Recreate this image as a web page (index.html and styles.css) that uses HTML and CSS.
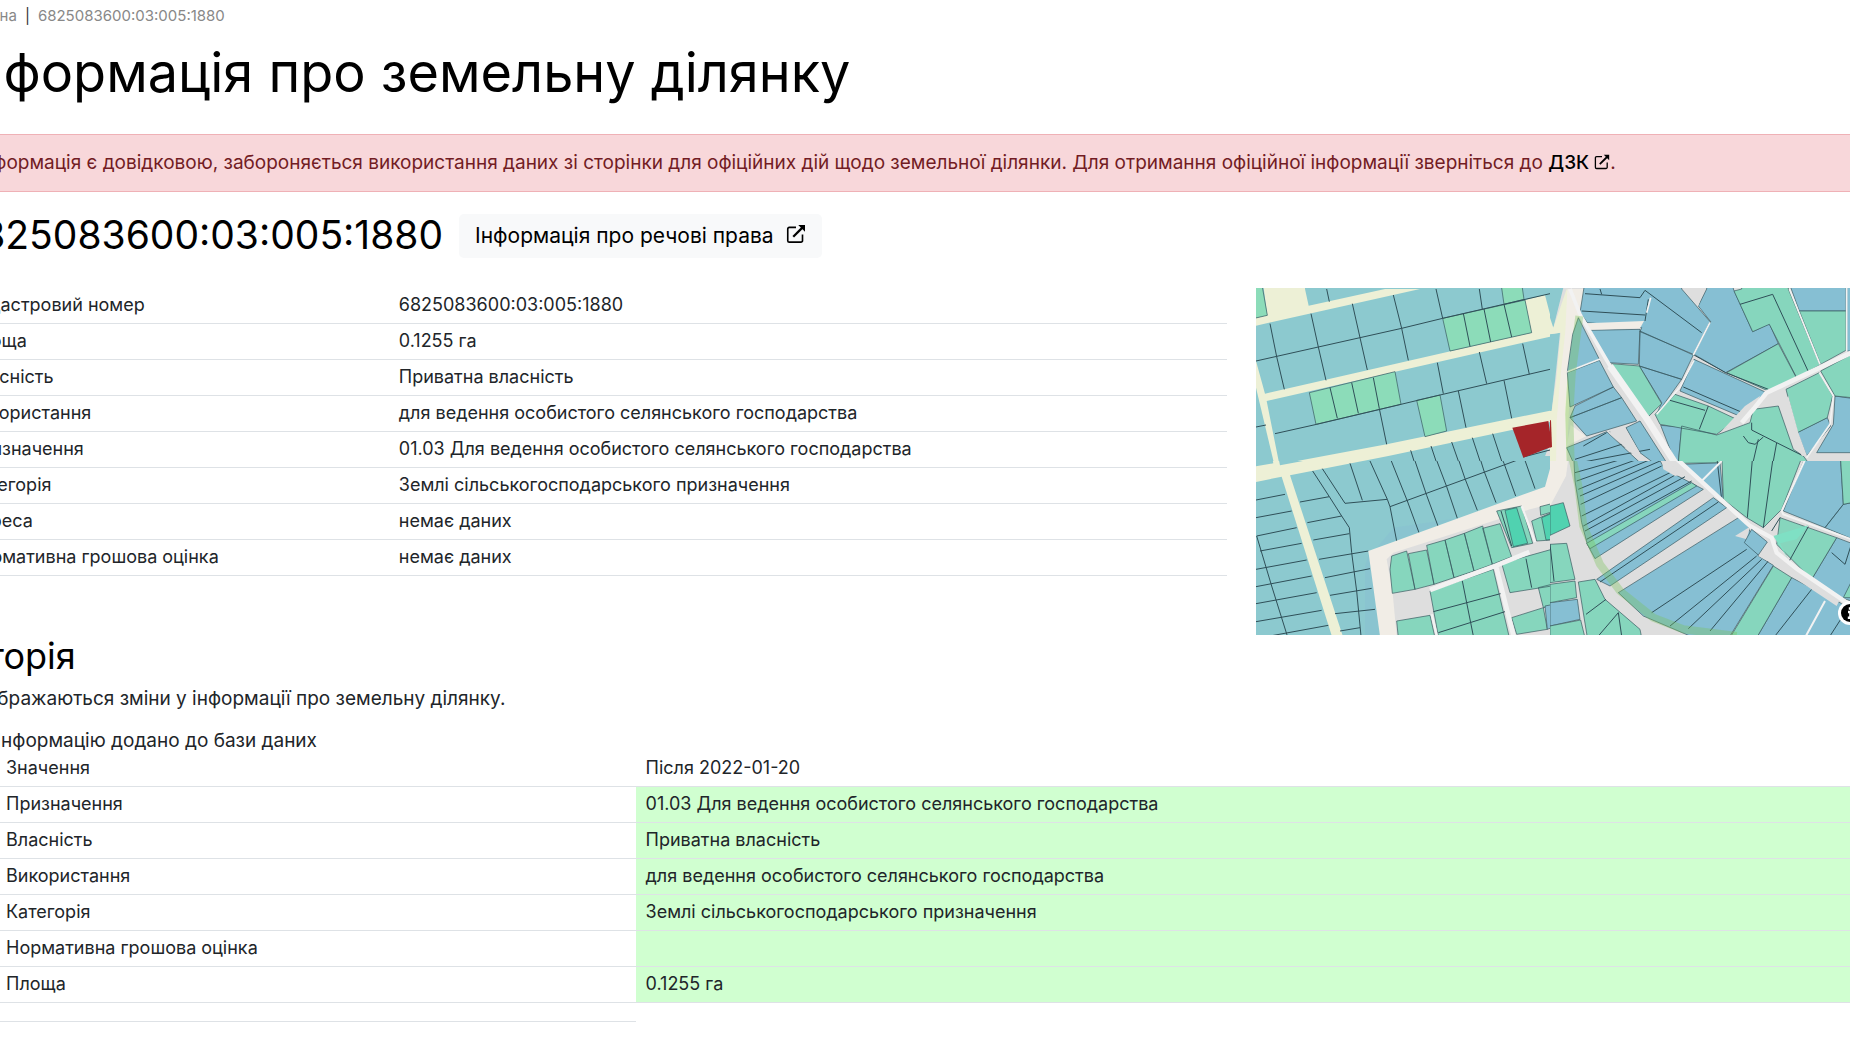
FILE: index.html
```html
<!DOCTYPE html>
<html lang="uk">
  <head>
    <meta charset="utf-8">
    <meta name="viewport" content="width=device-width, initial-scale=1">
    <title>6825083600:03:005:1880</title>
    <link rel="stylesheet" href="styles.css">
  </head>
  <body>

  <svg class="sprite" aria-hidden="true">
    <symbol id="ext" viewBox="0 0 16 16">
      <path d="M8 2.7H2.6a1.2 1.2 0 0 0-1.2 1.2v9.4a1.2 1.2 0 0 0 1.2 1.2H12a1.2 1.2 0 0 0 1.2-1.2V8.4" fill="none" stroke="currentColor" stroke-width="1.3"/>
      <path d="M5.8 10.2 13.5 2.500" fill="none" stroke="currentColor" stroke-width="1.8"/>
      <path d="M9.800.8h5.400v5.400z" fill="currentColor"/>
    </symbol>
  </svg>

  <div class="page">
    <nav class="breadcrumbs"><a href="#">Головна</a><span class="sep">|</span><span>6825083600:03:005:1880</span></nav>

    <h1>Інформація про земельну ділянку</h1>

    <div class="alert">
      Інформація є довідковою, забороняється використання даних зі сторінки для офіційних дій щодо земельної ділянки. Для отримання офіційної інформації зверніться до <a href="#">ДЗК <svg class="icon"><use href="#ext"/></svg></a>.
    </div>

    <div class="heading">
      <h2>6825083600:03:005:1880</h2>
      <a class="btn" href="#">Інформація про речові права <svg class="icon"><use href="#ext"/></svg></a>
    </div>

    <div class="row">
      <table class="table info">
        <tr><td>Кадастровий номер</td><td>6825083600:03:005:1880</td></tr>
        <tr><td>Площа</td><td>0.1255 га</td></tr>
        <tr><td>Власність</td><td>Приватна власність</td></tr>
        <tr><td>Використання</td><td>для ведення особистого селянського господарства</td></tr>
        <tr><td>Призначення</td><td>01.03 Для ведення особистого селянського господарства</td></tr>
        <tr><td>Категорія</td><td>Землі сільськогосподарського призначення</td></tr>
        <tr><td>Адреса</td><td>немає даних</td></tr>
        <tr><td>Нормативна грошова оцінка</td><td>немає даних</td></tr>
      </table>

      <div class="map">
        <svg class="map-canvas" viewBox="0 0 1863 1041" preserveAspectRatio="xMinYMin slice">
          <rect class="ground" width="1863" height="1041"/>

          <!-- south-west -->
          <svg x="-18" y="504" width="900" height="540">
            <path class="teal" d="M0-20H900V540H0z"/>
            <path class="blue nl" d="M380 275 620 187 430 215zM345 330 358 290 388 540H345z"/>
            <path class="cream" d="M0 34 70 22 60-20 80-20 90 28 240 0 340-20 515-20 415 0 120 58 280 545H247L95 62 0 82z"/>
            <path class="line" d="M20 240 65 390 112 540M18 132 105 115M18 185 125 165M20 240 140 215M30 285 155 262M18 340 170 312M18 392 185 360M18 443 200 410M18 497 215 463M60 540 235 508M150 138 238 122M172 200 275 180M190 252 298 233M207 310 355 285M225 365 360 338M240 418 365 397M255 473 375 460M270 525 330 515"/>
            <path class="line" d="M188 45 238 122 275 180 298 215 305 290 320 405 333 540M217 38 285 142 412 130M300 22 337 133M360 15 412 130 420 152 440 255M418 0 472 135 507 230M490 0 530 118 565 213M555 0 590 92 622 187M622 0 645 68 682 163M688 0 702 45 738 140M752 0 762 22 797 120M822 5 855 98M420 152 822 5"/>
            <path class="road" d="M355 285 885 92 905 20 960 20V540H390z"/>
            <path class="ground" d="M410 310 430 290 840 160 900 145V540H440L428 412z"/>
            <path class="green" d="M425 300 470 285 495 400 427 412 420 340zM475 293 530 282 552 385 495 400zM530 268 585 252 612 365 552 385zM585 252 643 232 672 345 612 365zM643 232 698 210 727 325 672 345zM698 217 750 203 785 302 727 325z"/>
            <path class="green" d="M740 165 815 150 848 262 785 275zM845 195 905 170V252L860 255zM870 152 905 143V168L872 178zM540 405 730 340 777 540H565zM440 495 540 478 555 545H445zM755 322 905 280V390L780 410zM865 395 905 385V450L880 455zM785 485 880 455 892 520 800 535z"/>
            <path class="bright" d="M765 163 800 155 833 262 790 272zM875 185 905 172V250L888 252z"/>
            <path class="blue" d="M885 450 905 446V515L892 520z"/>
            <path class="line" d="M637 375 670 540M550 467 755 412M565 530 765 467M828 308 845 395M753 165 785 270"/>
            <path class="way" d="M540 402 740 328 838 288M738 330 792 545" stroke-width="14"/>
            <path class="way" d="M815 150 855 258M545 475 562 545" stroke-width="7"/>
          </svg>

          <!-- north-west -->
          <svg x="-18" y="-21" width="900" height="540">
            <path class="teal" d="M0 0H905V470L880 540H0z"/>
            <path class="cream" d="M38 0 52 103 0 115V138L510 24H405L176 74 165 24V0zM0 240 18 240 45 338 845 155 825 57 885 42 900 100V167L50 360 88 550 410 490 905 388V422L415 525 120 583 60 583 0 280z"/>
            <path class="teal" d="M0 300 18 320 72 547 0 560z"/>
            <path class="green light" d="M0 0H34L52 103 0 115zM752 0H814L822 55 762 70zM578 112 825 57 845 155 600 210zM178 335 435 272 453 370 198 430zM500 358 570 342 590 450 525 467z"/>
            <path class="line" d="M18 240 205 198 455 142 578 112 900 38M60 128 80 227 103 325M183 98 205 198 228 298M307 68 330 170 352 267M430 42 455 142 475 238M558 24 578 112M688 24 697 85M230 24 238 62M640 97 660 196M702 84 722 183M762 70 785 168M75 458 200 430 390 385 570 342 900 265M240 320 262 412M305 305 325 397M370 290 388 383 410 490M562 245 580 338M688 213 710 308M818 188 838 280M625 330 648 440M762 298 785 412M728 458 755 540M667 470 690 540M605 483 625 540M543 495 558 540M482 508 492 540M18 438 48 432M820 528 900 507"/>
            <path class="selected" d="M787 440 895 420 907 497 820 530z"/>
          </svg>

          <!-- south-east -->
          <svg x="882" y="504" width="981" height="540">
            <path class="road" d="M0-30H60L48 60 0 150z"/>
            <path class="blue" d="M70-20H310L345 40 460 100 135 308 112 265 95 200 75 75zM140 370 490 125 530 155 180 390zM205 410 570 182 595 213 625 300 670 328 540 540H420L280 480zM400 25 510 20 520 130 455 75zM775-20H870L880 145 825 215 700 165zM880 145 905 140V248L825 215zM860 245 905 262V435L870 425 785 370zM725 365 870 440 905 465V545H620z"/>
            <path class="blue" d="M0 440 82 430 90 490 0 510z"/>
            <path class="green" d="M385-5H510L512 20 390 22zM515-20H765L695 160 640 215 590 185 520 130zM870-20H905V140L880 145zM690 185 860 245 785 370 680 265zM670 330 725 365 620 545H540zM110 262 425 80 440 90 120 278zM0 265 50 262 75 370 0 380zM0 385 75 375 80 425 0 440zM0 510 92 492 105 545H0zM85 378 135 370 165 430 270 520 275 545H112zM905 375 880 425H905z"/>
            <path class="bright" d="M0 150 40 140 60 210 0 238z"/>
            <path class="line" d="M75 50 250 0M80 75 290 0M85 100 315 5M90 120 330 15M92 145 335 30M95 180 370 45M100 210 385 52M105 225 405 62M110 250 425 75M150 378 505 138M305 470 590 280M360 510 620 300M415 518 635 310M480 525 655 315M608 0 592 185M670 0 640 215M775 212 715 320M690 185 665 225M785 400 675 540M885 470 840 540M845 290 885 325M885 325 905 262M0 265 12 375M108 475 168 430M145 540 205 470 215 540M500 0 515 130"/>
            <path class="glade" d="M670 240 775 208 740 250 690 262 715 310"/>
            <path class="way" d="M515 15 455 75M770 0 695 165 700 175 905 250M825 435 765 545" stroke-width="6"/>
            <path class="ground" d="M335 10 405 55 375 60 340 40zM555 240 600 212 590 250zM625 300 668 250 690 290 720 320 800 385 870 430 860 450 680 330z"/>
            <path class="way" d="M360-10 600 210 665 245 680 290 740 338 905 450" stroke-width="13"/>
            <path class="blue" d="M605 220 652 258 625 297 583 260z"/>
            <path class="verge" d="M62-20 85 90 100 210 150 325 210 405 310 485 400 520 560 540"/>
          </svg>

          <!-- north-east -->
          <svg x="882" y="-21" width="981" height="540">
            <rect class="ground" width="981" height="540"/>
            <path class="teal" d="M0 0H45L10 140 0 165zM0 160 30 155 15 300 5 390 0 400z"/>
            <path class="cream" d="M50 24 10 140 0 110V160L32 155 18 300 5 390 0 390V560H50L60 300 90 95z"/>
            <path class="road" d="M52 24H105L88 90 60 200 45 380 50 560H18L20 420 30 300 46 150z"/>
            <path class="selected" d="M0 418 3 418 6 498 0 500z"/>
            <path class="blue" d="M105 0H395V24L480 122 430 220 270 152 275 140 112 125 90 95zM115 148 270 145 265 250 175 245zM270 150 430 222 395 295 268 255zM268 255 395 295 320 400 335 365zM470 24V0H550V24L608 152 658 128 685 188 527 275 432 220 482 122 445 75zM715 0H888V90H748zM432 235 650 335 580 410 390 330zM742 455 832 410 842 435 770 525zM855 345 905 352V515H800L850 430zM890 0H905V210H890z"/>
            <path class="blue" d="M85 110 148 235 52 272 68 160zM52 275 148 238 190 318 60 378zM75 375 190 318 215 350 60 410zM60 410 215 350 260 420 110 465zM50 500 170 452 270 545 70 545zM228 440 270 420 350 545 310 545 270 515zM332 433 395 438 385 545 370 530z"/>
            <path class="road" d="M110 127 282 120 270 142 118 146zM62 432 108 466 50 495z"/>
            <path class="green" d="M185 248 268 255 335 368 290 412zM552 30 575 24V0H715V24L810 252 740 290 658 130 608 152zM685 188 740 292 655 330 530 275zM748 90H888V208L812 250zM375 340 475 375 560 415 500 460 330 430 315 400zM395 435 500 462 600 425 610 385 685 375 730 505 760 525 775 545H385zM708 325 808 275 848 345 832 410 742 455zM812 270 905 220V350L855 345z"/>
            <path class="line" d="M105 38 270 50 285 28 455 155M95 90 285 102M295 55 285 120M150 24 155 40M400 318 578 395M432 222 527 275 655 325M360 358 465 388M475 375 448 445M570 70 668 40 775 272M605 425 605 447 680 485 760 525M580 465 595 485 615 490 640 468M625 475 610 540M680 485 670 540M100 495 170 455M75 535 230 485M90 545 300 505M180 452 225 500"/>
            <path class="ground" d="M175 455 225 440 270 515 255 525zM392 0H470L445 75zM690 375 715 345 745 455 772 527 755 524z"/>
            <path class="way" d="M480 124 430 222M432 238 390 318 320 400M718 24 810 250M808 275 850 345 840 430 770 530M52 272 150 234M890 0V212M302 50 290 95" stroke-width="5"/>
            <path class="ground" d="M585 375 630 345 620 380 590 415 530 440 510 455z"/>
            <path class="way" d="M905 215 650 335 610 385 575 425" stroke-width="14"/>
            <path class="way" d="M60 24 90 100 180 255 290 412" stroke-width="11"/>
            <path class="way" d="M180 255 290 412 378 550" stroke-width="20"/>
            <path class="verge" d="M88 105 65 280 58 400 62 550"/>
          </svg>
        </svg>
        <button class="map-info" type="button" aria-label="Інформація про карту">
          <svg viewBox="0 0 24 24"><circle cx="12" cy="12" r="9"/><path d="M12 6.300v2.400M10 11h2.400v5M9.800 16.700h4.800" fill="none" stroke="#fff" stroke-width="2.400"/></svg>
        </button>
      </div>
    </div>

    <h3>Історія</h3>
    <p>Відображаються зміни у інформації про земельну ділянку.</p>

    <ul class="history">
      <li>
        Інформацію додано до бази даних
        <table class="table changes">
          <tr><td>Значення</td><td>Після 2022-01-20</td></tr>
          <tr><td>Призначення</td><td class="added">01.03 Для ведення особистого селянського господарства</td></tr>
          <tr><td>Власність</td><td class="added">Приватна власність</td></tr>
          <tr><td>Використання</td><td class="added">для ведення особистого селянського господарства</td></tr>
          <tr><td>Категорія</td><td class="added">Землі сільськогосподарського призначення</td></tr>
          <tr><td>Нормативна грошова оцінка</td><td class="added"></td></tr>
          <tr><td>Площа</td><td class="added">0.1255 га</td></tr>
          <tr class="last"><td></td></tr>
        </table>
      </li>
    </ul>
  </div>

  </body>
</html>
```

FILE: styles.css
```css
* {
  box-sizing: border-box;
}
body {
  margin: 0;
  background: #fff;
  color: #212529;
  font-family: Inter, "Open Sans", sans-serif;
  font-size: 19px;
  line-height: 24px;
  overflow-x: hidden;
}
.sprite {
  display: none;
}
.icon {
  width: 16px;
  height: 16px;
  vertical-align: -1px;
}
a {
  color: #000;
  text-decoration: none;
}

/* the content is wider than the window on both sides */
.page {
  margin: 0 -27px 0 -43px;
}
.breadcrumbs {
  padding-top: 4px;
  font-size: 15px;
  color: #888;
}
.breadcrumbs a {
  color: #888;
}
.breadcrumbs .sep {
  color: #333;
  padding: 0 8px;
}
h1, h2, h3 {
  margin: 0;
  color: #000;
  font-weight: 400;
}
h1 {
  padding: 15px 0 31px;
  font-size: 54px;
  line-height: 60px;
}
h2 {
  padding-bottom: 2px;
  font-size: 39px;
  line-height: 42px;
}
h3 {
  margin-top: 1px;
  font-size: 36px;
  line-height: 40px;
}
.alert {
  padding: 16px 19px;
  background: #f8d7da;
  border: 1px solid #efb1b6;
  color: #721c24;
}
.alert a {
  font-weight: 500;
}

.heading {
  display: flex;
  align-items: center;
  gap: 16px;
  margin: 22px 0 30px;
}
.btn {
  padding: 8px 16px;
  font-size: 21px;
  line-height: 28px;
  background: #f8f9fa;
  border-radius: 5px;
}
.btn .icon {
  width: 20px;
  height: 20px;
  margin-left: 6px;
}

.row {
  display: grid;
  grid-template-columns: minmax(0, 1270fr) minmax(0, 621fr);
  gap: 29px;
  align-items: start;
}
.table {
  width: 100%;
  table-layout: fixed;
  border-collapse: separate;
  border-spacing: 0;
  font-size: 18px;
  line-height: 24px;
}
.table td {
  height: 36px;
  padding: 5px 10px 6px;
  border-bottom: 1px solid #dee2e6;
}
.info td:first-child,
.changes td:first-child {
  width: 34%;
}
.changes .added {
  background: #d0ffd0;
}
.changes .last td {
  height: 19px;
  padding: 0;
}

.map {
  position: relative;
  height: 347px;
  overflow: hidden;
}
.map-canvas {
  display: block;
  width: 100%;
  height: 100%;
}
.map-info {
  position: absolute;
  right: 15px;
  bottom: 10px;
  width: 24px;
  height: 24px;
  padding: 0;
  border: 0;
  border-radius: 50%;
  background: #fff;
}
.map-info svg {
  display: block;
}
.ground { fill: #dedede; }
.road { fill: #f1ede6; }
.cream { fill: #edf0d6; }
.teal { fill: #8cc9cf; }
.blue { fill: #86bfd3; }
.green { fill: #86d6bd; }
.light { fill: #8cdcb9; }
.bright { fill: #50d2b0; }
.selected { fill: #a52529; }
.blue, .green, .bright {
  stroke: #35545c;
  stroke-width: 2;
}
.nl {
  stroke: none;
  opacity: .4;
}
.line {
  fill: none;
  stroke: #2f4f58;
  stroke-width: 3;
}
.way {
  fill: none;
  stroke: #f2f2f2;
}
.glade {
  fill: #7fe0c4;
}
.verge {
  fill: none;
  stroke: #77c35a;
  stroke-width: 24;
  stroke-opacity: .35;
}

p {
  margin: 11px 0 20px;
}
.history {
  margin: 0;
  padding-left: 39px;
  line-height: 20px;
}
```
